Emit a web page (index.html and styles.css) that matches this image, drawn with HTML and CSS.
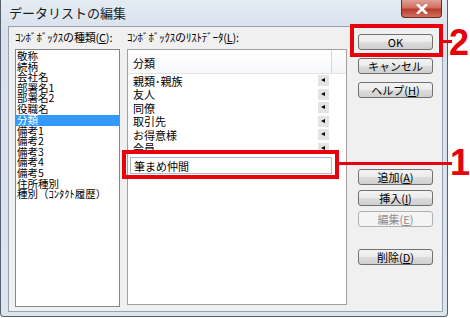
FILE: index.html
```html
<!DOCTYPE html>
<html lang="ja">
<head>
    <meta charset="UTF-8">
    <title>データリストの編集</title>
    <link rel="stylesheet" href="styles.css">
</head>
<body>
<div class="page">

    <!-- ダイアログ -->
    <div class="window">
        <div class="titlebar">
            <span class="title">データリストの編集</span>
            <div class="close-btn">
                <svg width="12" height="10" viewBox="0 0 12 10">
                    <path d="M2 1 L10 9 M10 1 L2 9" stroke="#fff" stroke-width="2.6" stroke-linecap="square"/>
                </svg>
            </div>
        </div>

        <div class="client">
            <!-- 種類 -->
            <div class="col-kind">
                <div class="label">ｺﾝﾎﾞﾎﾞｯｸｽの種類(<u>C</u>):</div>
                <ul class="listbox">
                    <li>敬称</li>
                    <li>続柄</li>
                    <li>会社名</li>
                    <li>部署名1</li>
                    <li>部署名2</li>
                    <li>役職名</li>
                    <li class="selected">分類</li>
                    <li>備考1</li>
                    <li>備考2</li>
                    <li>備考3</li>
                    <li>備考4</li>
                    <li>備考5</li>
                    <li>住所種別</li>
                    <li>種別（ｺﾝﾀｸﾄ履歴）</li>
                </ul>
            </div>

            <!-- リストデータ -->
            <div class="col-data">
                <div class="label">ｺﾝﾎﾞﾎﾞｯｸｽのﾘｽﾄﾃﾞｰﾀ(<u>L</u>):</div>
                <div class="grid">
                    <div class="grid-head">
                        <div class="head-cell">分類</div>
                        <div class="head-rest"></div>
                    </div>
                    <div class="row"><span>親類･親族</span><i class="mark"></i></div>
                    <div class="row"><span>友人</span><i class="mark"></i></div>
                    <div class="row"><span>同僚</span><i class="mark"></i></div>
                    <div class="row"><span>取引先</span><i class="mark"></i></div>
                    <div class="row"><span>お得意様</span><i class="mark"></i></div>
                    <div class="row"><span>会員</span><i class="mark"></i></div>
                    <input class="edit" type="text" value="筆まめ仲間">
                </div>
            </div>

            <!-- ボタン -->
            <div class="col-buttons">
                <button class="btn">OK</button>
                <button class="btn">キャンセル</button>
                <button class="btn">ヘルプ(<u>H</u>)</button>
                <div class="btn-group">
                    <button class="btn">追加(<u>A</u>)</button>
                    <button class="btn">挿入(<u>I</u>)</button>
                    <button class="btn" disabled>編集(<u>E</u>)</button>
                </div>
                <button class="btn btn-delete">削除(<u>D</u>)</button>
            </div>
        </div>
    </div>

    <!-- 注釈 -->
    <div class="mark-box mark-edit"></div>
    <div class="mark-line line-1"></div>
    <div class="mark-num num-1">1</div>

    <div class="mark-box mark-ok"></div>
    <div class="mark-line line-2"></div>
    <div class="mark-num num-2">2</div>

</div>
</body>
</html>
```

FILE: styles.css
```css
* {
    margin: 0;
    padding: 0;
    box-sizing: border-box;
}

body {
    background-color: #fff;
    font-family: "Noto Sans CJK JP", sans-serif;
    font-size: 11px;
    color: #000;
}

.page {
    position: relative;
    width: 470px;
    height: 318px;
    overflow: hidden;
}

/* ウィンドウ枠 */
.window {
    position: relative;
    width: 448px;
    height: 317px;
    background: linear-gradient(#e4ebf3, #d9e2ec 30px, #dce4ed);
    border: 1px solid #55606c;
    border-top: none;
    border-radius: 0 0 4px 4px;
    padding: 0 4px 4px 7px;
}

.titlebar {
    height: 26px;
    padding-left: 1px;
    display: flex;
    align-items: center;
}

.title {
    font-size: 13px;
    color: #1b1b1b;
    margin-top: -1px;
}

.close-btn {
    position: absolute;
    top: 0;
    right: 5px;
    width: 41px;
    height: 18px;
    border: 1px solid #6e2a22;
    border-top: none;
    border-radius: 0 0 4px 4px;
    background: linear-gradient(#e0a197, #cf6f61 45%, #bb3b2a 55%, #d07060);
    display: flex;
    justify-content: center;
    align-items: center;
}

/* クライアント領域 */
.client {
    width: 435px;
    height: 286px;
    background-color: #f0f0f0;
    border: 1px solid #96a2ae;
    display: flex;
    padding: 3px 0 0 6px;
}

.label {
    height: 19px;
    line-height: 14px;
    white-space: nowrap;
    letter-spacing: -0.2px;
}

.col-kind {
    width: 105px;
}

.listbox {
    list-style: none;
    height: 258px;
    background-color: #fff;
    border: 1px solid #828790;
    padding-top: 1px;
}

.listbox li {
    height: 10.6px;
    line-height: 10.6px;
    padding-left: 1px;
    font-size: 10.5px;
    white-space: nowrap;
}

.listbox li.selected {
    background-color: #3399ff;
    color: #fff;
    height: 11px;
}

.col-data {
    width: 220px;
    margin-left: 7px;
}

.grid {
    position: relative;
    height: 256px;
    background-color: #fff;
    border: 1px solid #a0a0a0;
}

.grid-head {
    display: flex;
    height: 24px;
    border-bottom: 1px solid #e3e3e3;
}

.head-cell {
    width: 204px;
    padding: 5px 0 0 5px;
    background: linear-gradient(#fff, #f7f8fa);
    border-right: 1px solid #d5d5d5;
}

.head-rest {
    flex: 1;
    background: linear-gradient(#fff, #f3f4f6);
}

.row {
    height: 13.5px;
    display: flex;
    align-items: center;
    padding-left: 5px;
}

.row span {
    width: 185px;
}

/* 行の右にある小さな三角 */
.mark {
    position: relative;
    width: 11px;
    height: 11px;
    background-color: #e4e4e4;
}

.mark::after {
    content: "";
    position: absolute;
    left: 3px;
    top: 3px;
    border-top: 2.5px solid transparent;
    border-bottom: 2.5px solid transparent;
    border-right: 4px solid #000;
}

.edit {
    position: absolute;
    left: 2px;
    top: 107px;
    width: 202px;
    height: 17px;
    border: 1px solid #a9bdd1;
    background-color: #fff;
    font-family: inherit;
    font-size: 11px;
    padding-left: 3px;
    outline: none;
}

/* ボタン */
.col-buttons {
    margin-left: 11px;
    width: 75px;
    padding-top: 4px;
    display: flex;
    flex-direction: column;
}

.btn {
    width: 75px;
    height: 16px;
    margin-bottom: 8px;
    font-family: inherit;
    font-size: 11px;
    line-height: 13px;
    color: #000;
    border: 1px solid #707070;
    border-radius: 3px;
    background: linear-gradient(#f3f3f3, #ebebeb 50%, #dddddd 51%, #cfcfcf);
}

.btn[disabled] {
    color: #8d8d8d;
    border-color: #adb2b5;
    background: #f4f4f4;
}

.btn-group {
    margin-top: 63px;
    display: flex;
    flex-direction: column;
}

.btn-group .btn {
    margin-bottom: 5px;
}

.btn-delete {
    margin-top: 17px;
}

/* 注釈 */
.mark-box {
    position: absolute;
    border: 4px solid #e8000b;
}

.mark-edit {
    left: 122px;
    top: 150px;
    width: 217px;
    height: 29px;
}

.mark-ok {
    left: 350px;
    top: 24px;
    width: 93px;
    height: 33px;
}

.mark-line {
    position: absolute;
    height: 3px;
    background-color: #e8000b;
}

.line-1 {
    left: 338px;
    top: 162px;
    width: 114px;
}

.line-2 {
    left: 442px;
    top: 40px;
    width: 10px;
}

.mark-num {
    position: absolute;
    font-family: "Liberation Sans", Arial, sans-serif;
    font-weight: bold;
    font-size: 36px;
    line-height: 36px;
    color: #e8000b;
}

.num-1 {
    left: 450px;
    top: 145px;
}

.num-2 {
    left: 449px;
    top: 25px;
}
```
